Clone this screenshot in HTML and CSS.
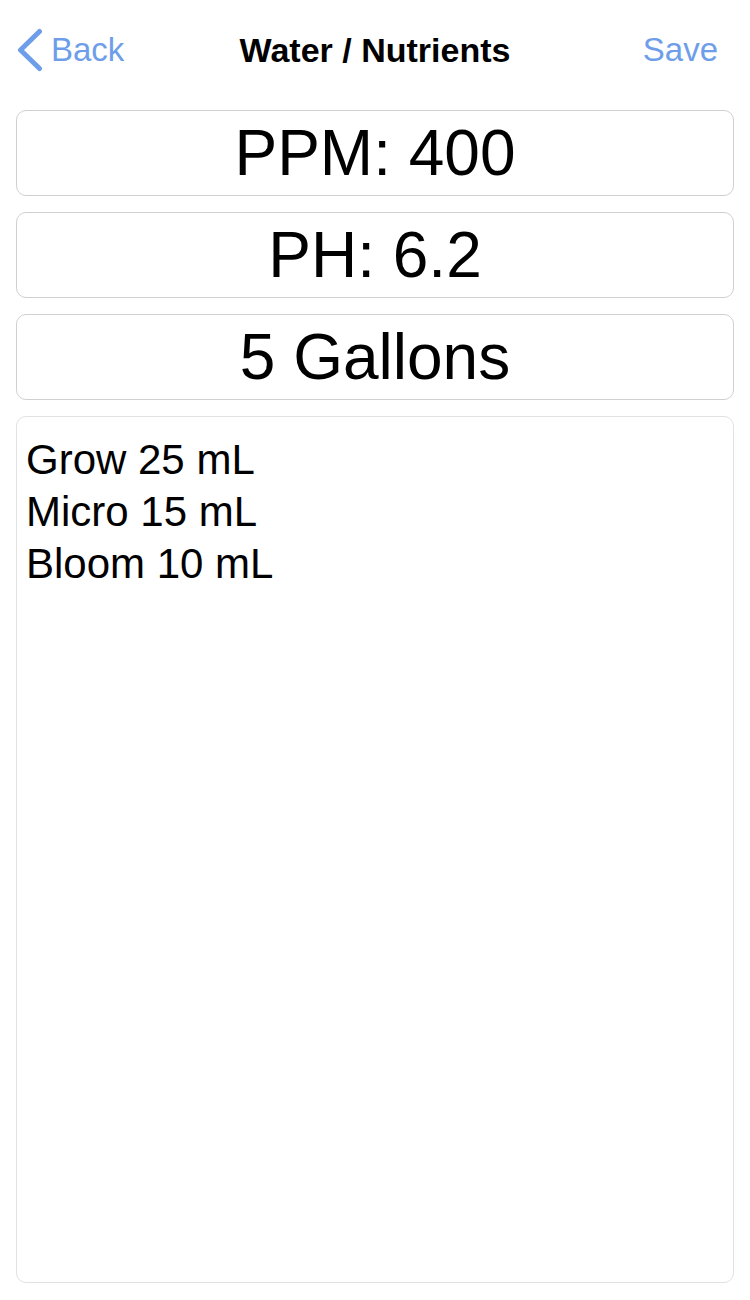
FILE: index.html
```html
<!DOCTYPE html>
<html>
<head>
<meta charset="utf-8">
<link rel="stylesheet" href="styles.css">
</head>
<body>
<div class="nav">
  <div class="nav-left">
    <svg class="chev" width="28" height="44" viewBox="0 0 28 44"><polyline points="23.5,3.5 4.5,22 23.5,40.5" fill="none" stroke="#6e9ee9" stroke-width="5" stroke-linecap="round" stroke-linejoin="round"/></svg>
    <span class="nav-link">Back</span>
  </div>
  <div class="nav-title">Water / Nutrients</div>
  <div class="nav-right"><span class="nav-link">Save</span></div>
</div>
<div class="content">
  <div class="field">PPM: 400</div>
  <div class="field">PH: 6.2</div>
  <div class="field">5 Gallons</div>
  <div class="notes">Grow 25 mL<br>Micro 15 mL<br>Bloom 10 mL</div>
</div>
</body>
</html>
```

FILE: styles.css
```css
html, body {
  margin: 0;
  padding: 0;
  background: #ffffff;
}
body {
  font-family: "Liberation Sans", Arial, sans-serif;
  color: #000;
  width: 750px;
  height: 1300px;
  overflow: hidden;
}
.nav {
  height: 100px;
  display: grid;
  grid-template-columns: 1fr auto 1fr;
  align-items: center;
}
.nav-left {
  display: flex;
  align-items: center;
  padding-left: 16px;
}
.chev {
  display: block;
  margin-right: 7px;
}
.nav-link {
  color: #6e9ee9;
  font-size: 33px;
}
.nav-title {
  font-size: 34px;
  font-weight: bold;
}
.nav-right {
  display: flex;
  justify-content: flex-end;
  padding-right: 32px;
}
.content {
  padding: 10px 16px 0 16px;
  display: flex;
  flex-direction: column;
  gap: 16px;
}
.field {
  height: 84px;
  border: 1px solid #d0d0d0;
  border-radius: 10px;
  display: flex;
  align-items: center;
  justify-content: center;
  font-size: 64px;
}
.notes {
  height: 848px;
  border: 1px solid #e2e2e2;
  border-radius: 10px;
  padding: 17px 9px 0 9px;
  font-size: 42px;
  line-height: 52px;
}
```
